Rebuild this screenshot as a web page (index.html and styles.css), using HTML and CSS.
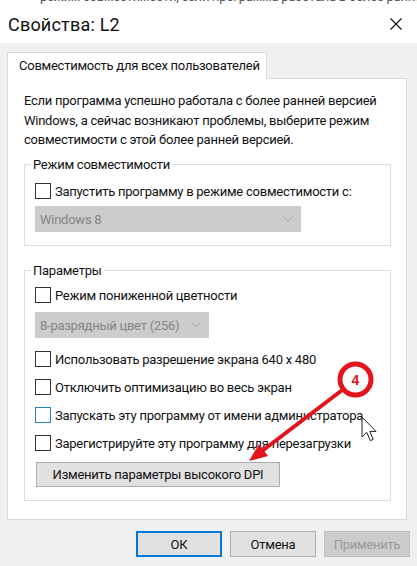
FILE: index.html
```html
<!DOCTYPE html>
<html lang="ru">
<head>
  <meta charset="UTF-8">
  <title>Свойства: L2</title>
  <link rel="stylesheet" href="styles.css">
</head>
<body>

  <div class="bleed"><span>режим совместимости, если программа работала в более ранней версии Windows</span></div>

  <div class="titlebar">
    <span class="title">Свойства: L2</span>
    <svg class="close" width="12" height="12" viewBox="0 0 12 12">
      <path d="M0.5 0.5 L11.5 11.5 M11.5 0.5 L0.5 11.5" stroke="#111" stroke-width="1.1" fill="none"/>
    </svg>
  </div>

  <div class="tabs">
    <div class="tab">Совместимость для всех пользователей</div>
  </div>

  <div class="panel">
    <p class="intro">Если программа успешно работала с более ранней версией<br>
      Windows, а сейчас возникают проблемы, выберите режим<br>
      совместимости с этой более ранней версией.</p>

    <div class="group compat">
      <div class="legend">Режим совместимости</div>
      <label class="check"><span class="box"></span>Запустить программу в режиме совместимости с:</label>
      <div class="select wide">
        <span>Windows 8</span>
        <svg width="10" height="6" viewBox="0 0 10 6"><path d="M0.5 0.5 L5 5 L9.5 0.5" stroke="#a6a6a6" fill="none"/></svg>
      </div>
    </div>

    <div class="group params">
      <div class="legend">Параметры</div>
      <label class="check first"><span class="box"></span>Режим пониженной цветности</label>
      <div class="select narrow">
        <span>8-разрядный цвет (256)</span>
        <svg width="10" height="6" viewBox="0 0 10 6"><path d="M0.5 0.5 L5 5 L9.5 0.5" stroke="#a6a6a6" fill="none"/></svg>
      </div>
      <label class="check spaced"><span class="box"></span>Использовать разрешение экрана 640 x 480</label>
      <label class="check"><span class="box"></span>Отключить оптимизацию во весь экран</label>
      <label class="check"><span class="box hover"></span>Запускать эту программу от имени администратора</label>
      <label class="check"><span class="box"></span>Зарегистрируйте эту программу для перезагрузки</label>
      <button class="dpi">Изменить параметры высокого DPI</button>
    </div>
  </div>

  <div class="actions">
    <button class="btn default">ОК</button>
    <button class="btn">Отмена</button>
    <button class="btn disabled">Применить</button>
  </div>

  <!-- red callout drawn over the dialog -->
  <svg class="callout" width="417" height="566" viewBox="0 0 417 566">
    <line x1="341" y1="391" x2="262" y2="451" stroke="#e3141b" stroke-width="4" stroke-linecap="round"/>
    <polygon points="249,461 268,456 259,444" fill="#e3141b"/>
    <circle cx="355.5" cy="379.5" r="15.5" fill="#fff" stroke="#e3141b" stroke-width="5"/>
    <text x="355.5" y="385" text-anchor="middle" class="num">4</text>
  </svg>

  <svg class="cursor" width="16" height="27" viewBox="0 0 16 27">
    <path d="M1 1 V21 L5.8 16.4 L9.2 24.6 L12.2 23.4 L8.8 15.4 H15 Z" fill="#fff" stroke="#222" stroke-width="1" stroke-linejoin="round"/>
  </svg>

</body>
</html>
```

FILE: styles.css
```css
body {
  margin: 0;
  width: 417px;
  height: 566px;
  overflow: hidden;
  position: relative;
  background: #f0f0f0;
  font-family: Roboto, "Noto Sans", sans-serif;
  font-size: 13px;
  letter-spacing: -0.25px;
  color: #111;
  white-space: nowrap;
}

.bleed {
  height: 5px;
  overflow: hidden;
  background: #fff;
  color: #555;
  padding-left: 40px;
}
.bleed span {
  display: block;
  margin-top: -11px;
}

.titlebar {
  height: 38px;
  background: #fff;
  display: flex;
  align-items: center;
  justify-content: space-between;
  padding: 0 15px 0 8px;
}
.title {
  font-size: 18px;
  letter-spacing: 0.2px;
}

.tabs {
  display: flex;
  padding: 9px 0 0 7px;
}
.tab {
  position: relative;
  z-index: 1;
  width: 260px;
  box-sizing: border-box;
  height: 27px;
  margin-bottom: -1px;
  padding-left: 11px;
  line-height: 26px;
  background: #fff;
  border: 1px solid #d9d9d9;
  border-bottom: none;
}

.panel {
  margin: 0 10px 0 7px;
  height: 442px;
  box-sizing: border-box;
  padding: 12px 15px 0 16px;
  background: #fff;
  border: 1px solid #d9d9d9;
}

.intro {
  margin: 0;
  line-height: 19.5px;
}

.group {
  border: 1px solid #dcdcdc;
  padding: 0 0 13px 10px;
}
.compat {
  margin-top: 14.5px;
}
.params {
  margin-top: 24px;
}
.legend {
  width: fit-content;
  margin: -9px 0 0 -4px;
  padding: 0 2px;
  line-height: 17px;
  background: #fff;
}

.check {
  display: flex;
  align-items: center;
  gap: 4px;
  height: 28px;
}
.compat .check {
  margin-top: 4px;
}
.params .first {
  margin-top: 2px;
}
.params .spaced {
  margin-top: 7px;
}
.box {
  flex: none;
  width: 16px;
  height: 16px;
  box-sizing: border-box;
  border: 1px solid #333;
  background: #fff;
}
.box.hover {
  border-color: #2a7fb8;
}

.select {
  display: flex;
  align-items: center;
  justify-content: space-between;
  height: 26px;
  box-sizing: border-box;
  padding: 0 8px 0 5px;
  background: #cccccc;
  color: #858585;
}
.compat .select {
  margin-top: 1px;
}
.params .select {
  margin-top: 3px;
}
.wide {
  width: 266px;
}
.narrow {
  width: 174px;
}

.dpi {
  display: block;
  width: 244px;
  height: 25px;
  margin: 5px 0 0 1px;
  padding: 0;
  font: inherit;
  letter-spacing: inherit;
  color: #111;
  background: #e1e1e1;
  border: 1px solid #adadad;
}

.actions {
  display: flex;
  justify-content: flex-end;
  gap: 8px;
  padding: 11px 7px 0 0;
}
.btn {
  width: 86px;
  height: 26px;
  padding: 0;
  font: inherit;
  letter-spacing: inherit;
  color: #111;
  background: #e1e1e1;
  border: 1px solid #adadad;
}
.btn.default {
  border: 2px solid #0078d7;
}
.btn.disabled {
  color: #9a9a9a;
  background: #cccccc;
  border-color: #bfbfbf;
}

.callout {
  position: absolute;
  left: 0;
  top: 0;
  pointer-events: none;
}
.callout .num {
  font-family: "Liberation Sans", Arial, sans-serif;
  font-weight: bold;
  font-size: 14px;
  letter-spacing: 0;
  fill: #e3141b;
}

.cursor {
  position: absolute;
  left: 361px;
  top: 416px;
}
```
